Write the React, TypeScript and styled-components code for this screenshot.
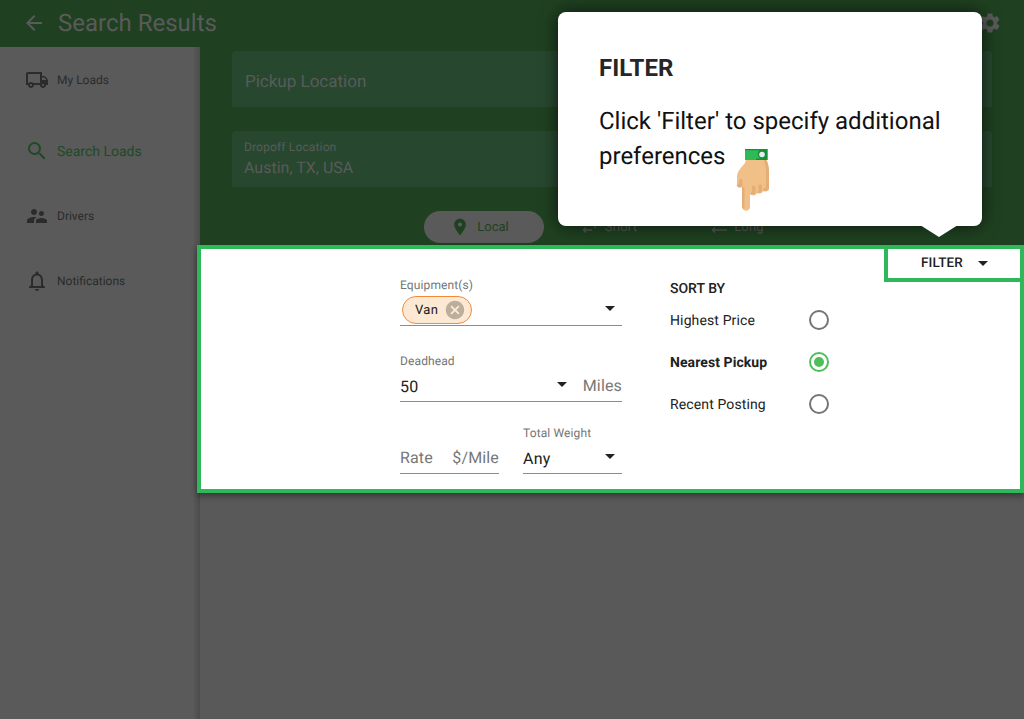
import React from "react";
import styled, { createGlobalStyle } from "styled-components";
import {
  MdArrowBack,
  MdArrowDropDown,
  MdCancel,
  MdNotificationsNone,
  MdOutlineLocalShipping,
  MdPlace,
  MdSearch,
  MdSettings,
  MdSupervisorAccount,
} from "react-icons/md";

const GlobalStyle = createGlobalStyle`
  * { box-sizing: border-box; }
  body {
    margin: 0;
    font-family: Roboto, "Liberation Sans", sans-serif;
    background: #595959;
    text-rendering: geometricPrecision;
  }
  button { text-rendering: inherit; }
  svg { display: block; flex: none; }
`;

const Page = styled.div`
  position: relative;
  width: 1024px;
  height: 719px;
  overflow: hidden;
  display: flex;
  flex-direction: column;
`;

const Header = styled.header`
  height: 47px;
  flex: none;
  display: flex;
  align-items: center;
  padding: 0 22px 1px 22px;
  background: #1f4121;
  color: #5a5a5a;
  & > svg:last-child { margin-left: auto; }
`;

const Title = styled.h1`
  margin: 0 0 0 12px;
  font-size: 24px;
  line-height: 46px;
  font-weight: 400;
`;

const Body = styled.div`
  flex: 1;
  display: flex;
`;

const Sidebar = styled.nav`
  width: 200px;
  flex: none;
  display: flex;
  flex-direction: column;
  background: linear-gradient(to left, #4b4b4b, #5a5a5a 7px);
`;

const NavItem = styled.a<{ $active?: boolean; $gap: number }>`
  display: flex;
  align-items: center;
  height: 24px;
  margin-top: ${(p) => p.$gap}px;
  padding-left: 25px;
  gap: 8px;
  color: ${(p) => (p.$active ? "#1f4a24" : "#2b2b2b")};
  font-size: ${(p) => (p.$active ? 14 : 12)}px;
  line-height: ${(p) => (p.$active ? 18 : 14)}px;
`;

const NavText = styled.span<{ $active?: boolean }>`
  padding-top: ${(p) => (p.$active ? 2 : 0)}px;
`;

const Main = styled.main`
  flex: 1;
  min-width: 0;
  display: flex;
  flex-direction: column;
`;

const SearchArea = styled.section`
  height: 198px;
  flex: none;
  padding: 4px 32px 0;
  background: #1f4121;
  color: #5a5a5a;
  display: flex;
  flex-direction: column;
  gap: 24px;
`;

const Field = styled.div<{ $empty?: boolean }>`
  height: 56px;
  flex: none;
  display: flex;
  flex-direction: column;
  justify-content: center;
  padding: ${(p) => (p.$empty ? "6px 13px 0" : "0 12px")};
  border-radius: 4px 4px 0 0;
  background: #27482f;
`;

const FieldLabel = styled.span`
  font-size: 12px;
  line-height: 16px;
  letter-spacing: 0.15px;
`;

const FieldValue = styled.span<{ $large?: boolean }>`
  font-size: ${(p) => (p.$large ? 17 : 16)}px;
  line-height: ${(p) => (p.$large ? 24 : 25)}px;
`;

const Distances = styled.div`
  display: flex;
  justify-content: center;
  gap: 8px;
`;

const Distance = styled.button<{ $selected?: boolean }>`
  width: 120px;
  height: 32px;
  padding: 0 ${(p) => (p.$selected ? 9 : 5)}px 0 0;
  border: 0;
  border-radius: 16px;
  display: flex;
  align-items: center;
  justify-content: center;
  gap: 7px;
  font: 400 13px Roboto, sans-serif;
  letter-spacing: ${(p) => (p.$selected ? 0 : 0.2)}px;
  background: ${(p) => (p.$selected ? "#5a5a5a" : "transparent")};
  color: ${(p) => (p.$selected ? "#1f4121" : "#5a5a5a")};
`;

const Panel = styled.section`
  position: relative;
  z-index: 1;
  height: 248px;
  flex: none;
  margin-left: -3px;
  padding: 27px 0 0 199px;
  border: 4px solid #2fb859;
  background: #fff;
  color: #212121;
  display: flex;
  gap: 48px;
  box-shadow: 0 3px 6px rgba(0, 0, 0, 0.4);
`;

const Form = styled.div`
  width: 222px;
  display: flex;
  flex-direction: column;
`;

const Row = styled.div`
  display: flex;
  gap: 24px;
`;

const Control = styled.div<{ $top?: number }>`
  width: 100%;
  height: 50px;
  margin-top: ${(p) => p.$top ?? 0}px;
  display: flex;
  flex-direction: column;
  justify-content: space-between;
  border-bottom: 1px solid #8c8c8c;
`;

const Label = styled.label`
  height: 18px;
  font-size: 12px;
  line-height: 18px;
  letter-spacing: 0.12px;
  color: #757575;
  white-space: nowrap;
`;

const Value = styled.div`
  height: 31px;
  display: flex;
  align-items: center;
  font-size: 16px;
  letter-spacing: 0.25px;
`;

const Selected = styled.span`
  padding-top: 2px;
`;

const Caret = styled(MdArrowDropDown)<{ $right?: number }>`
  margin: -4px ${(p) => p.$right ?? 0}px 0 auto;
`;

const Unit = styled.span<{ $end?: boolean }>`
  color: #777;
  margin: -1px 0 0 ${(p) => (p.$end ? "auto" : 0)};
  letter-spacing: 0.15px;
`;

const Chip = styled.span`
  width: 70px;
  height: 28px;
  margin: 1px 0 0 2px;
  padding: 0 5px 0 12px;
  display: flex;
  align-items: center;
  justify-content: space-between;
  border: 1px solid #f28a3c;
  border-radius: 14px;
  background: #fde9d3;
  font-size: 13px;
  letter-spacing: 0.3px;
`;

const Sort = styled.div`
  width: 159px;
`;

const SortTitle = styled.h2`
  margin: 4px 0 12px;
  font-size: 14px;
  line-height: 18px;
  font-weight: 500;
`;

const Option = styled.div<{ $selected?: boolean }>`
  height: 20px;
  margin-bottom: 22px;
  display: flex;
  align-items: center;
  justify-content: space-between;
  font-size: 14px;
  font-weight: ${(p) => (p.$selected ? 700 : 400)};
  letter-spacing: ${(p) => (p.$selected ? 0.08 : 0.12)}px;
`;

const OptionText = styled.span`
  padding-top: 2px;
`;

const Radio = styled.span<{ $selected?: boolean }>`
  width: 20px;
  height: 20px;
  border: 2px solid ${(p) => (p.$selected ? "#50bd5b" : "#757575")};
  border-radius: 50%;
  padding: 3px;
  background: ${(p) => (p.$selected ? "#50bd5b" : "transparent")} content-box;
`;

const FilterToggle = styled.button`
  position: absolute;
  top: -4px;
  right: -4px;
  width: 140px;
  height: 37px;
  padding: 0 25px 1px 33px;
  border: 4px solid #2fb859;
  display: flex;
  align-items: center;
  justify-content: space-between;
  background: #fff;
  color: #212121;
  font: 500 13.5px Roboto, sans-serif;
  letter-spacing: 0.1px;
`;

const Tooltip = styled.aside`
  position: absolute;
  z-index: 2;
  left: 558px;
  top: 12px;
  width: 424px;
  height: 214px;
  padding: 40px 30px 0 41px;
  border-radius: 8px;
  background: #fff;
  color: #111;
  box-shadow: 0 0 18px rgba(0, 0, 0, 0.65);
`;

const TooltipTitle = styled.h2`
  margin: 0;
  font-size: 24px;
  line-height: 32px;
  font-weight: 700;
  color: #262626;
`;

const TooltipText = styled.p`
  margin: 20px 0 0;
  font-size: 24px;
  line-height: 35px;
`;

const Pointer = styled.svg`
  position: absolute;
  left: 362px;
  top: 213px;
`;

const Hand = styled.svg`
  position: absolute;
  left: 178px;
  top: 136px;
`;

const Arrows = ({ dashed }: { dashed?: boolean }) => (
  <svg width="16" height="16" viewBox="0 0 16 16" fill="none" stroke="currentColor" strokeWidth="1.4">
    <path d="M12 2l2.500 2.500L12 7M14.500 4.500H1" />
    <path d="M4 8.500L1.500 11 4 13.500" />
    <path d={dashed ? "M1.500 11H10M12 8.500h2" : "M1.500 11H16"} />
  </svg>
);

const options = ["Highest Price", "Nearest Pickup", "Recent Posting"];

export default function App() {
  return (
    <Page>
      <GlobalStyle />
      <Header>
        <MdArrowBack size={24} />
        <Title>Search Results</Title>
        <MdSettings size={24} />
      </Header>
      <Body>
        <Sidebar>
          <NavItem $gap={21}><MdOutlineLocalShipping size={24} /><NavText>My Loads</NavText></NavItem>
          <NavItem $gap={47} $active><MdSearch size={24} /><NavText $active>Search Loads</NavText></NavItem>
          <NavItem $gap={41}><MdSupervisorAccount size={24} /><NavText>Drivers</NavText></NavItem>
          <NavItem $gap={41}><MdNotificationsNone size={24} /><NavText>Notifications</NavText></NavItem>
        </Sidebar>
        <Main>
          <SearchArea>
            <Field $empty><FieldValue $large>Pickup Location</FieldValue></Field>
            <Field>
              <FieldLabel>Dropoff Location</FieldLabel>
              <FieldValue>Austin, TX, USA</FieldValue>
            </Field>
            <Distances>
              <Distance $selected><MdPlace size={20} />Local</Distance>
              <Distance><Arrows dashed />Short</Distance>
              <Distance><Arrows />Long</Distance>
            </Distances>
          </SearchArea>
          <Panel>
            <Form>
              <Control>
                <Label>Equipment(s)</Label>
                <Value>
                  <Chip>Van<MdCancel size={22} color="#bcae9d" /></Chip>
                  <Caret size={24} />
                </Value>
              </Control>
              <Control $top={26}>
                <Label>Deadhead</Label>
                <Value><Selected>50</Selected><Caret size={24} $right={9} /><Unit>Miles</Unit></Value>
              </Control>
              <Row>
                <Control $top={22}>
                  <Label />
                  <Value><Unit>Rate</Unit><Unit $end>$/Mile</Unit></Value>
                </Control>
                <Control $top={22}>
                  <Label>Total Weight</Label>
                  <Value><Selected>Any</Selected><Caret size={24} /></Value>
                </Control>
              </Row>
            </Form>
            <Sort>
              <SortTitle>SORT BY</SortTitle>
              {options.map((o, i) => (
                <Option key={o} $selected={i === 1}>
                  <OptionText>{o}</OptionText>
                  <Radio $selected={i === 1} />
                </Option>
              ))}
            </Sort>
            <FilterToggle>FILTER<MdArrowDropDown size={24} /></FilterToggle>
          </Panel>
        </Main>
      </Body>
      <Tooltip>
        <TooltipTitle>FILTER</TooltipTitle>
        <TooltipText>Click 'Filter' to specify additional preferences</TooltipText>
        <Hand width="34" height="64" viewBox="0 0 34 64">
          <path fill="#f0c088" d="M10 11h20c2 4 3 8 3 14v15c0 4-5 4-6 3-1 3-4 3-6 2-1 3-5 3-7 1v13c0 5-7.500 5-8 0V38c-3 3-5 1-5-2v-8c1-6 4-8 8-13z" />
          <path fill="#e5ae76" d="M27.500 11H30c2 4 3 8 3 14v15c0 4-6 4-6 1l3-2V24c0-5-1-9-2.500-13zM3 33c0-3 3.500-3 3.500 0v5c-2 3-5 1-6-1l2.500-1zM6 39h2.500v20L8 61l-2-2zM16 39c0-2 3.500-2 3.500 0v6c-1 2-4.500 2-5.500 1l2-2zM22.500 38c0-2 3.500-2 3.500 0v5c-1 2-4 2-5 2l1.500-3z" />
          <path fill="#30ba57" d="M9 1h22.500v11H9z" />
          <path fill="#129137" d="M9 1h22.500v11H20v-1.500h4.500a5 5 0 0 1-1-8.300H9z" />
          <circle cx="26" cy="6.500" r="2.800" fill="#e5eaf2" />
        </Hand>
        <Pointer width="38" height="12" viewBox="0 0 38 12"><path fill="#fff" d="M0 0h38L19 12z" /></Pointer>
      </Tooltip>
    </Page>
  );
}
